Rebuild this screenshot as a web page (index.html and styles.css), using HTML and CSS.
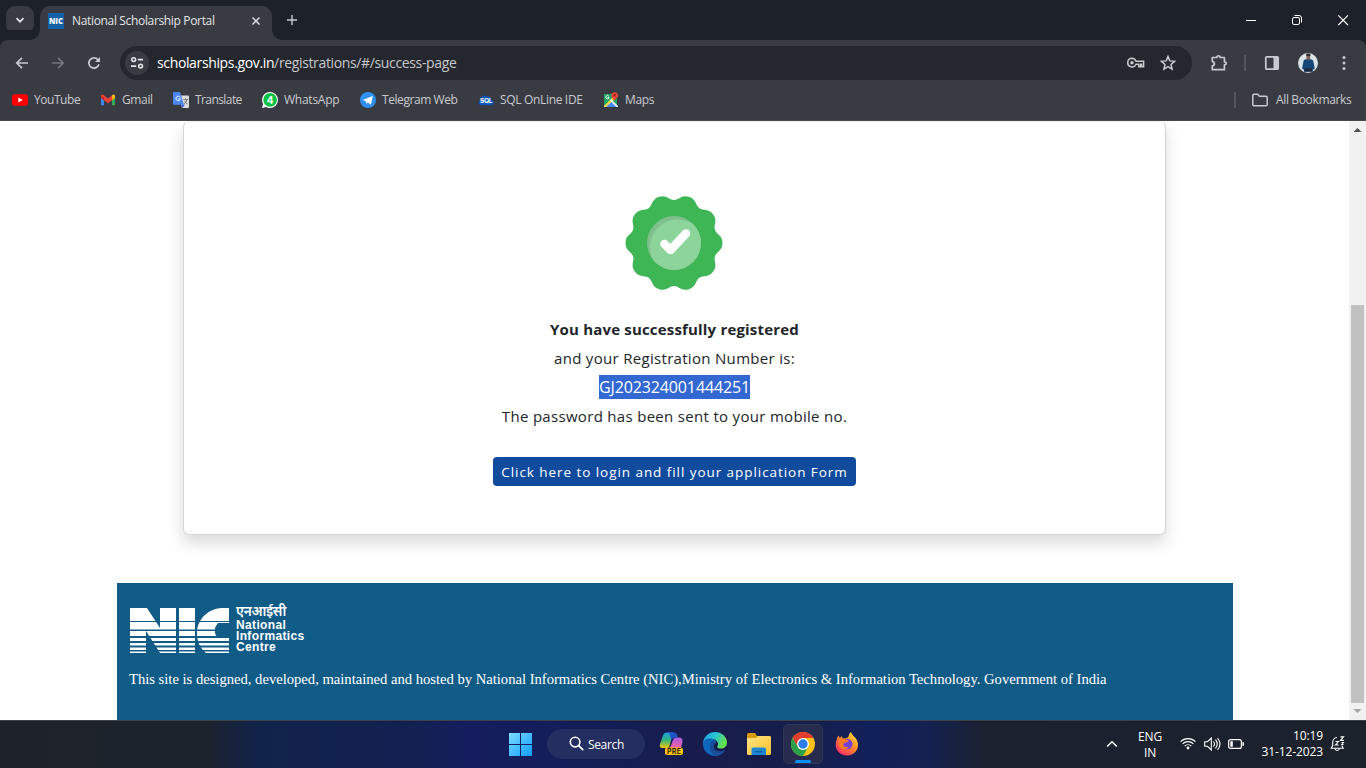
FILE: index.html
```html
<!DOCTYPE html>
<html lang="en">
<head>
<meta charset="utf-8">
<title>National Scholarship Portal</title>
<link rel="stylesheet" href="styles.css">
</head>
<body>
<div class="screen">
  <header class="tabstrip">
    <div class="tabsearch"><svg width="28" height="28" viewBox="0 0 28 28"><path d="M10.500 12.200l3.500 3.500 3.500-3.500" class="ln light thick"/></svg></div>
    <div class="tab">
      <svg class="favicon" width="16" height="16" viewBox="0 0 16 16"><rect width="16" height="16" fill="#1461a8"/><text x="1" y="10.600" class="fav-text" textLength="14" lengthAdjust="spacingAndGlyphs">NIC</text></svg>
      <span class="tab-title">National Scholarship Portal</span>
      <svg class="tab-close" width="16" height="16" viewBox="0 0 16 16"><path d="M4.500 4.500l7 7M11.500 4.500l-7 7" class="ln light mid"/></svg>
    </div>
    <svg class="newtab" width="16" height="16" viewBox="0 0 16 16"><path d="M8 3v10M3 8h10" class="ln pale mid"/></svg>
    <div class="winbtns">
      <svg width="46" height="40" viewBox="0 0 46 40"><path d="M18 20.500h10" stroke="#fff"/></svg>
      <svg width="46" height="40" viewBox="0 0 46 40"><g fill="none" stroke="#fff"><rect x="18.500" y="17.500" width="7" height="7" rx="1.500"/><path d="M20.500 15.500h4.500a2.500 2.500 0 0 1 2.500 2.500v4.500"/></g></svg>
      <svg width="46" height="40" viewBox="0 0 46 40"><path d="M18.300 15.300l9.700 9.700M28 15.300L18.300 25" stroke="#fff" stroke-width="1.100"/></svg>
    </div>
  </header>

  <div class="toolbar">
    <svg class="nav" width="16" height="16" viewBox="0 0 16 16"><path d="M14 8H3M8 2.800L2.800 8 8 13.200" class="ln pale thick"/></svg>
    <svg class="nav" width="16" height="16" viewBox="0 0 16 16"><path d="M2 8h11M8 2.800L13.200 8 8 13.200" class="ln dim thick"/></svg>
    <svg class="nav" width="16" height="16" viewBox="0 0 16 16"><path d="M12.900 9.300A5.100 5.100 0 1 1 11.800 4.600L13.400 6.200" class="ln pale thick"/><path d="M14 1.900v5H9z" fill="#c7cad3"/></svg>
    <div class="omnibox">
      <span class="siteinfo"><svg width="24" height="24" viewBox="0 0 24 24"><g fill="none" stroke="#e3e4e8" stroke-width="1.600"><circle cx="8.700" cy="8.600" r="1.900"/><path d="M12.800 8.600H18M6 15.100h5.200"/><circle cx="15.600" cy="15.100" r="1.900"/></g></svg></span>
      <span class="url"><b>scholarships.gov.in</b>/registrations/#/success-page</span>
      <svg class="key" width="18" height="12" viewBox="0 0 18 12"><path d="M5 1.300a4.300 4.300 0 1 0 4 6h2.800v2.500h1.800V7.300h1v2.500h2V4.300H9A4.300 4.300 0 0 0 5 1.300z" fill="none" stroke="#c7c8cc" stroke-width="1.500"/><circle cx="5" cy="5.700" r="1.800" fill="#c7c8cc"/></svg>
      <svg class="star" width="18" height="18" viewBox="0 0 18 18"><path d="M9 2.500l1.800 4.400 4.800.4-3.600 3.100 1.100 4.700L9 12.600l-4.100 2.500L6 10.400 2.400 7.300l4.800-.4z" class="ln pale" stroke-width="1.500"/></svg>
    </div>
    <svg class="ext" width="18" height="18" viewBox="0 0 18 18"><path d="M2.300 3.500h4.600c-.1-2.300 3.400-2.300 3.200 0h4.300v4.300c2.300 0 2.300 3.200 0 3.100v4.800H2.300v-3.800c2.800-.3 2.800-4 0-4.300z" class="ln pale" stroke-width="1.700" stroke-linejoin="round"/></svg>
    <i class="sep"></i>
    <svg class="panel" width="16" height="16" viewBox="0 0 16 16"><rect x="1.800" y="1.800" width="12.400" height="12.400" rx="1" class="ln pale" stroke-width="1.700"/><path d="M9.500 2h5v12h-5z" fill="#c7cad3"/></svg>
    <svg class="avatar" width="20" height="20" viewBox="0 0 20 20"><circle cx="10" cy="10" r="10" fill="#d9e3e5"/><path d="M5.500 8.200Q6 5.900 10.300 6q4.500 0 5 2.200l1.500 7.300-1.900 1.200v2H6v-2l-1.900-1z" fill="#164578"/><path d="M8.400 1.700q2-1.300 3.800 0v4q-2 2-3.800 0z" fill="#816456"/><path d="M8.200 1.200q2-1.200 4.200 0v1.600H8.200z" fill="#202026"/><path d="M6.500 15.500h7.500v3H6.500z" fill="#222936"/></svg>
    <svg class="dots" width="4" height="16" viewBox="0 0 4 16"><g fill="#c7cad3"><circle cx="2" cy="2.500" r="1.500"/><circle cx="2" cy="8" r="1.500"/><circle cx="2" cy="13.500" r="1.500"/></g></svg>
  </div>

  <nav class="bookmarks">
    <a class="bm bm-yt"><svg width="16" height="16" viewBox="0 0 16 16"><rect y="2.300" width="16" height="11.500" rx="2.700" fill="#f00"/><path d="M6.300 5.500v5l4.300-2.500z" fill="#fff"/></svg><span>YouTube</span></a>
    <a class="bm bm-gm"><svg width="16" height="16" viewBox="0 0 16 16"><path d="M1 4v9.300h3V7z" fill="#4285f4"/><path d="M12 7v6.300h3V4z" fill="#34a853"/><path d="M1 3.800Q1.300 2 3.300 2.700L8 6.400l4.700-3.700 2.300 1.800-1.200 2.600L8 11.200 1 6z" fill="#ea4335"/><path d="M12 3.300q2.600-1.900 3 .8V6l-3 2.300z" fill="#fbbc04"/><path d="M1 4v2l3 2.300V6z" fill="#c5221f"/></svg><span>Gmail</span></a>
    <a class="bm bm-tr"><svg width="16" height="16" viewBox="0 0 16 16"><path d="M6 3.500h9q1 0 1 1V15q0 1-1 1H9z" fill="#dadce0"/><path d="M8 12.500h4L9.500 16z" fill="#3367d6"/><path d="M1 0h6l4 12.700H1q-1 0-1-1V1q0-1 1-1z" fill="#4c87f0"/><path d="M7 5.300a2.200 2.200 0 1 0 .3 1.600H5.200" fill="none" stroke="#fff"/><path d="M10.400 7.500h4.700M12.700 6.500v1M14.100 7.600q-.8 3-3 4.300M11.500 9q1 2 3 3" fill="none" stroke="#777"/></svg><span>Translate</span></a>
    <a class="bm bm-wa"><svg width="16" height="16" viewBox="0 0 16 16"><path d="M8 0a8 8 0 0 1 0 16q-2 0-3.800-1L0 16l1.100-4A8 8 0 0 1 8 0z" fill="#fff"/><circle cx="8.100" cy="7.900" r="6.800" fill="#09c143"/><text x="8" y="11.700" class="wa-num">4</text></svg><span>WhatsApp</span></a>
    <a class="bm bm-tg"><svg width="16" height="16" viewBox="0 0 16 16"><circle cx="8" cy="8" r="8" fill="#2f91ee"/><path d="M2.700 8L12.700 4 11 12.700 7.800 10.400 6.300 11.800 6 9.200z" fill="#fff"/></svg><span>Telegram Web</span></a>
    <a class="bm bm-sql"><svg width="16" height="16" viewBox="0 0 16 16"><path d="M3.500 13.200C0 13 0 9 2.500 8.200 2.500 4 6.500 1.800 9 4.700c3-1 4.500 1 4.300 3 3.500 1 3.200 5.300 0 5.500z" fill="#0756b8"/><text x="2" y="10.900" class="sql-text" textLength="12" lengthAdjust="spacingAndGlyphs">SQL</text></svg><span>SQL OnLine IDE</span></a>
    <a class="bm bm-map"><svg width="16" height="16" viewBox="0 0 16 16"><path d="M1 2h13v13H1z" fill="#1ea362"/><path d="M8 9l6.500 6H2z" fill="#4a89f3"/><path d="M1 14L12 3h3v1L3 15H1z" fill="#ffd94b"/><path d="M8.200 7.200L15 14v1h-1.500L7 8.500z" fill="#fff"/><path d="M5.800 4.100a1.700 1.700 0 1 0 .4 1.400H4.500" fill="none" stroke="#fff" stroke-width=".9"/><path d="M11.700 9.500C11.500 7 8.500 6 8.500 3.400a3.200 3.200 0 0 1 6.400 0c0 2.600-3 3.600-3.200 6.100z" fill="#ea4335"/><circle cx="11.700" cy="3.300" r="1.100" fill="#8a1a12"/></svg><span>Maps</span></a>
    <i class="sep sep-bm"></i>
    <a class="bm bm-all"><svg width="18" height="16" viewBox="0 0 18 16"><path d="M1.800 3.700q0-1.400 1.400-1.400h3.500L8.500 4.200h6.300q1.400 0 1.400 1.400v6.800q0 1.300-1.400 1.300H3.200q-1.400 0-1.400-1.300z" class="ln pale" stroke-width="1.500"/></svg><span>All Bookmarks</span></a>
  </nav>

  <main class="viewport">
    <div class="page">
      <section class="card">
        <svg class="seal" width="98" height="96" viewBox="0 0 98 96">
          <defs>
            <path id="lobe" d="M0 0L40.900-13.290C42.450-8.530 48.500-8 48.500 0S42.450 8.530 40.900 13.290z"/>
            <clipPath id="disc"><circle cx="49" cy="48" r="27"/></clipPath>
          </defs>
          <g transform="translate(49 48)" fill="#3eb655"><circle r="42.900"/><use href="#lobe"/><use href="#lobe" transform="rotate(36)"/><use href="#lobe" transform="rotate(72)"/><use href="#lobe" transform="rotate(108)"/><use href="#lobe" transform="rotate(144)"/><use href="#lobe" transform="rotate(180)"/><use href="#lobe" transform="rotate(216)"/><use href="#lobe" transform="rotate(252)"/><use href="#lobe" transform="rotate(288)"/><use href="#lobe" transform="rotate(324)"/></g>
          <circle cx="49" cy="48" r="27" fill="#7fbf8c"/>
          <circle cx="52.500" cy="52" r="27.500" fill="#8dd49a" clip-path="url(#disc)"/>
          <path d="M39.500 49l6 6L61 38.500" fill="none" stroke="#fff" stroke-width="8.500" stroke-linecap="round" stroke-linejoin="round"/>
        </svg>
        <p class="msg strong"><span>You have successfully registered</span></p>
        <p class="msg reg"><span>and your Registration Number is:</span></p>
        <p class="msg num"><mark>GJ202324001444251</mark></p>
        <p class="msg pass"><span>The password has been sent to your mobile no.</span></p>
        <button class="login">Click here to login and fill your application Form</button>
      </section>
      <footer class="foot">
        <div class="brand">
          <svg width="100" height="46" viewBox="0 0 100 46"><g fill="#fff"><path d="M0 0h17l13 20V0h16v45H30L16 23v22H0z"/><path d="M49 0h16v45H49z"/><path d="M99 0H92C77 1 67 12 67 25c0 9 3 15 9 20h23V29H87q-5-7 1-14h11z"/></g><g fill="#115b87"><path d="M0 13h100v1H0zM0 21.500h100V23H0zM0 28h100v2H0zM0 33h100v2H0zM0 37.500h100v2H0zM0 42h100v1.500H0z"/></g></svg>
          <div class="brand-text"><span class="hi">एनआईसी</span><span>National</span><span>Informatics</span><span>Centre</span></div>
        </div>
        <p class="credit">This site is designed, developed, maintained and hosted by National Informatics Centre (NIC),Ministry of Electronics &amp; Information Technology. Government of India</p>
      </footer>
    </div>
    <div class="scroll">
      <svg width="17" height="17" viewBox="0 0 17 17"><path d="M4.500 11l4-4 4 4z" fill="#505050"/></svg>
      <i class="thumb"></i>
      <svg width="17" height="17" viewBox="0 0 17 17"><path d="M4.500 6l4 4 4-4z" fill="#a3a3a3"/></svg>
    </div>
  </main>

  <div class="taskbar">
    <div class="apps">
      <svg class="start" width="23" height="23" viewBox="0 0 23 23"><defs><linearGradient id="w" x2="1" y2="1"><stop stop-color="#7ddcff"/><stop offset="1" stop-color="#0d9cfb"/></linearGradient></defs><path d="M0 0h11v11H0zM12 0h11v11H12zM0 12h11v11H0zM12 12h11v11H12z" fill="url(#w)"/></svg>
      <div class="search"><svg width="15" height="15" viewBox="0 0 15 15"><circle cx="6.100" cy="6.100" r="4.800" fill="none" stroke="#fff" stroke-width="1.600"/><path d="M9.700 9.700l4 4" stroke="#fff" stroke-width="1.700" stroke-linecap="round"/></svg><span>Search</span></div>
      <svg class="copilot" width="25" height="24" viewBox="0 0 25 24"><defs><linearGradient id="c1" x2="0" y2="1"><stop stop-color="#1a9fe6"/><stop offset=".5" stop-color="#37b77a"/><stop offset="1" stop-color="#f2c60d"/></linearGradient><linearGradient id="c2" x2="0" y2="1"><stop stop-color="#a45ee5"/><stop offset="1" stop-color="#f5619b"/></linearGradient></defs><path d="M4 3.500Q5 .5 8 .5h6L10.500 14q-.5 2-3 2H3q-3 0-2-4z" fill="url(#c1)"/><path d="M10 .5h5q3 0 3.500 5h-3q-2 0-3 3z" fill="#1e55c9"/><path d="M17 5.500h3q4 0 3.500 4.500L22 16H11l3-8q.7-2.500 3-2.500z" fill="url(#c2)"/><rect x="6" y="15.500" width="18" height="7.500" rx="2.500" fill="#ffc400"/><text x="8" y="21.800" class="pre" textLength="14">PRE</text></svg>
      <svg class="edge" width="24" height="24" viewBox="0 0 24 24"><defs><linearGradient id="e" x2="1" y2=".4"><stop stop-color="#1c9be2"/><stop offset=".55" stop-color="#2bc5cf"/><stop offset="1" stop-color="#66e04b"/></linearGradient></defs><path d="M0 11C1 4 6 0 12 0c8 0 12 6 12 10.500 0 4-3 6-6 6-4 0-4.500-1.700-3-3.500C16 9 10 5 5 7.500 2 9 .5 10.500 0 11z" fill="url(#e)"/><path d="M0 11c1-4 4-5 7.500-4.500C12 7 14 10 12.500 11c-3 2-2.500 8 4 8.500 2.500.3 4-1 5.500-1.500C20 22 15.500 24 12 24 5 24-.5 18 0 11z" fill="#0f67bd"/><path d="M7 12c1-4 6-4.500 5.500-1C9 13.500 10 18 15 19.300c3 .7 5-.7 7-1.300-2 4-7.500 6-9.500 5.800C8 22 6 17 7 12z" fill="#164d96"/></svg>
      <svg class="folder" width="24" height="22" viewBox="0 0 24 22"><defs><linearGradient id="f" x2="1" y2="1"><stop stop-color="#ffe584"/><stop offset="1" stop-color="#fbc02d"/></linearGradient></defs><path d="M0 1.500Q0 0 1.500 0H8l2 3h12.500Q24 3 24 4.500V10H0z" fill="#d99c09"/><path d="M0 5h9l2-2h11.500Q24 3 24 4.500V20.500q0 1.500-1.500 1.500h-21Q0 22 0 20.500z" fill="url(#f)"/><path d="M4.500 22v-6q0-1.500 1.500-1.500h11.500q1.500 0 1.500 1.500v6z" fill="#1e87d2"/><path d="M8 18h7v1.300H8z" fill="#0b609f"/></svg>
      <div class="active"><svg width="24" height="24" viewBox="0 0 24 24"><circle cx="12" cy="12" r="12" fill="#fbc116"/><path d="M1.600 6A12 12 0 0 1 22.400 6H12L6.800 15z" fill="#e33b2e"/><path d="M1.600 6A12 12 0 0 0 12 24l5.200-9L12 17 6.800 15z" fill="#2aa04a"/><circle cx="12" cy="12" r="6" fill="#fff"/><circle cx="12" cy="12" r="4.700" fill="#2a7de9"/></svg><i></i></div>
      <svg class="firefox" width="24" height="24" viewBox="0 0 24 24"><defs><linearGradient id="ff" x1="1" x2=".2" y2="1"><stop stop-color="#fff044"/><stop offset=".45" stop-color="#ff9420"/><stop offset="1" stop-color="#fa256d"/></linearGradient></defs><path d="M1.500 8Q2 5 3.500 3.500L4.800 6 7 4l.5 2.500L12 6l1.500-1.500Q14 1 16 0q.5 2.500 3 4.500 4 3.500 4 8.500C23 19 18 23.500 12 23.500S.7 19 .7 13q0-3 .8-5z" fill="url(#ff)"/><circle cx="12.300" cy="12" r="5.200" fill="#7542d8"/><path d="M3.500 9q3-3 7.500-1.500l3 1.200q-1 1.800-3.500 1.800-3.500 1-1.500 4 2.500 1.300 5-.3-1.500 3-5.500 3.300-5.500-1.500-5-8.500z" fill="#ff7a24"/></svg>
    </div>
    <div class="tray">
      <svg class="chev" width="12" height="8" viewBox="0 0 12 8"><path d="M1.200 6.500L6 1.700l4.800 4.800" fill="none" stroke="#fff" stroke-width="1.500"/></svg>
      <div class="lang"><span>ENG</span><span>IN</span></div>
      <svg class="wifi" width="16" height="13" viewBox="0 0 16 13"><g fill="none" stroke="#fff" stroke-width="1.150"><path d="M.6 4.700a10.500 10.500 0 0 1 14.800 0M2.600 6.900a7.600 7.600 0 0 1 10.800 0M4.700 9.100a4.700 4.700 0 0 1 6.600 0"/></g><circle cx="8" cy="11" r="1.400" fill="#fff"/></svg>
      <svg class="vol" width="17" height="14" viewBox="0 0 17 14"><g fill="none" stroke="#fff" stroke-width="1.100"><path d="M.7 4.700h2.800L7.300 1v12L3.500 9.300H.7zM9.500 4.500q2 2.500 0 5M11.500 2.700q3.500 4.300 0 8.600M13.500 1q5 6 0 12"/></g></svg>
      <svg class="bat" width="16" height="10" viewBox="0 0 16 10"><rect x=".6" y=".6" width="12.800" height="8.800" rx="2" fill="none" stroke="#fff" stroke-width="1.200"/><path d="M2.300 2.300h2.500v5.400H2.300zM14.500 3h.5q1 0 1 1v2q0 1-1 1h-.5z" fill="#fff"/></svg>
      <div class="clock"><span>10:19</span><span class="date">31-12-2023</span></div>
      <svg class="bell" width="16" height="16" viewBox="0 0 16 16"><g fill="none" stroke="#fff" stroke-width="1.100"><path d="M7 1.500C4 1.600 2.700 4.300 2.700 6.500v3L1.200 12.300h12L11.800 9.500M5 13q2 3 4.500 0M5.500 5.500h3l-3 3.500h3.200M10.500.9h3l-3 3.500h3.300M11.500 6.500h1.800l-1.500 2h1.700"/></g></svg>
    </div>
  </div>
</div>
</body>
</html>
```
FILE: styles.css
```css
* { box-sizing: border-box; }
body { margin: 0; font-family: "Open Sans", "Noto Sans", sans-serif; }
svg { display: block; flex: none; }
.screen { width: 1366px; height: 768px; overflow: hidden; display: flex; flex-direction: column; background: #fff; }
.ln { fill: none; }
.light { stroke: #e3e4e8; }
.pale { stroke: #c7cad3; }
.dim { stroke: #74767c; }
.thick { stroke-width: 1.7; }
.mid { stroke-width: 1.4; }

.tabstrip { height: 40px; flex: none; background: #1d2129; display: flex; align-items: center; padding-left: 6px; }
.tabsearch { width: 28px; height: 28px; border-radius: 9px; background: #393b43; }
.tab { position: relative; width: 232px; height: 34px; margin: 6px 0 0 6px; padding: 0 8px; background: #393b43; border-radius: 10px 10px 0 0; display: flex; align-items: center; padding-bottom: 5px; }
.tab::before, .tab::after { content: ""; position: absolute; bottom: 0; width: 10px; height: 10px; }
.tab::before { left: -10px; background: radial-gradient(circle at 0 0, transparent 9.500px, #393b43 10px); }
.tab::after { right: -10px; background: radial-gradient(circle at 100% 0, transparent 9.500px, #393b43 10px); }
.tab-title { margin-left: 8px; font-size: 12px; line-height: 18px; color: #e3e4e8; white-space: nowrap; letter-spacing: -.34px; }
.fav-text { font: 900 8px "Open Sans", sans-serif; fill: #fff; }
.tab-close { margin-left: auto; }
.newtab { margin-left: 12px; }
.winbtns { display: flex; margin-left: auto; }

.toolbar { height: 46px; flex: none; background: #393b43; display: flex; align-items: center; padding: 0 20px 0 14px; box-shadow: 0 -10px 0 #1d2129; border-radius: 8px 8px 0 0; }
.nav { margin-right: 20px; }
.omnibox { width: 1072px; height: 34px; margin-left: -2px; border-radius: 17px; background: #24272e; display: flex; align-items: center; padding: 0 15px 0 5px; }
.siteinfo { width: 24px; height: 24px; border-radius: 50%; background: #393b43; }
.url { margin-left: 8px; font-size: 14px; line-height: 20px; color: #c7c8cc; letter-spacing: -.36px; }
.url b { font-weight: 400; color: #fff; }
.key { margin-left: auto; margin-right: 14px; }
.ext { margin-left: 18px; }
.sep { width: 2px; height: 16px; background: #53555d; }
.toolbar .sep { margin-left: 16px; }
.panel { margin-left: 18px; }
.avatar { margin-left: 18px; }
.dots { margin-left: auto; }

.bookmarks { height: 35px; flex: none; background: #393b43; border-bottom: 1px solid #47494f; display: flex; align-items: center; padding: 0 15px 7px 12px; font-size: 12px; color: #c9cacf; }
.bm { display: flex; align-items: center; gap: 6px; white-space: nowrap; letter-spacing: -.36px; }
.bm-yt { width: 88px; letter-spacing: -.45px; }
.bm-gm { width: 73px; }
.bm-tr { width: 89px; letter-spacing: -.58px; }
.bm-wa { width: 98px; letter-spacing: -.25px; }
.bm-tg { width: 118px; letter-spacing: -.43px; }
.bm-sql { width: 125px; letter-spacing: -.33px; }
.wa-num { font: 700 10px Inter, sans-serif; fill: #fff; text-anchor: middle; }
.sql-text { font: 700 6px Inter, sans-serif; fill: #fff; }
.sep-bm { margin-left: auto; margin-right: 15px; }
.bm-all { width: 100px; gap: 7px; }

.viewport { height: 599px; flex: none; display: flex; overflow: hidden; }
.page { width: 1349px; }
.card { width: 983px; height: 414px; margin: 0 0 48px 183px; background: #fff; border: 1px solid #d5d5d5; border-top-color: #eee; border-radius: 6px; box-shadow: 0 8px 16px rgba(0,0,0,.15); display: flex; flex-direction: column; align-items: center; padding-top: 73px; }
.seal { margin: 0 1px 24px 0; }
.msg { margin: 0; height: 29px; line-height: 29px; font-size: 15px; color: #212529; white-space: nowrap; letter-spacing: .31px; }
.strong { font-weight: 700; letter-spacing: .18px; }
.num { font-size: 16px; letter-spacing: -.12px; }
mark { display: inline-block; height: 24px; line-height: 24px; background: #3367d1; color: #fff; }
.login { width: 363px; height: 29px; margin-top: 26px; border: 0; border-radius: 4px; background: #114b9e; color: #fff; font: 13.500px/29px "Open Sans", sans-serif; letter-spacing: .94px; padding: 1px 0 0; white-space: nowrap; }
.foot { width: 1116px; height: 138px; margin-left: 117px; background: #115b87; color: #fff; padding: 20px 12px; }
.brand { display: flex; align-items: flex-start; height: 51px; padding: 5px 0 0 1px; }
.brand-text { margin: -5px 0 0 6px; display: flex; flex-direction: column; font: 700 12px/11px "Liberation Sans", sans-serif; letter-spacing: .35px; }
.brand-text .hi { font: 600 13.500px/20px "Noto Sans Devanagari", "Noto Sans", sans-serif; height: 17px; letter-spacing: -.2px; }
.credit { margin: 17px 0 0; font: 14.670px/17px "Liberation Serif", serif; white-space: nowrap; letter-spacing: -.022px; }
.scroll { width: 17px; background: #f1f1f1; display: flex; flex-direction: column; }
.thumb { width: 13px; height: 398px; margin: auto 2px 0; background: #c1c1c1; }

.taskbar { height: 48px; flex: none; border-top: 1px solid #3d414a; background: linear-gradient(90deg, #1e232b 0, #1d232d 205px, #12234b 260px, #122052 420px, #151d5e 470px, #131e55 600px, #181c4c 700px, #161e4b 800px, #12205a 870px, #142150 930px, #1b212f 985px, #1c222c 1366px); display: flex; align-items: center; }
.apps { display: flex; align-items: center; padding: 0 0 2px 509px; height: 47px; }
.start { margin-top: 1px; }
.search { width: 98px; height: 30px; margin-left: 15px; border-radius: 15px; background: #242e60; color: #fff; font-size: 12px; display: flex; align-items: center; gap: 4px; padding-left: 22px; }
.search span { letter-spacing: -.35px; padding-top: 1px; }
.copilot { margin-left: 14px; }
.pre { font: 700 7px Inter, sans-serif; fill: #222; }
.edge { margin-left: 19px; }
.folder { margin-left: 20px; }
.active { width: 40px; height: 40px; margin-left: 12px; border: 1px solid #303653; border-radius: 5px; background: #272c4f; display: flex; flex-direction: column; align-items: center; padding-top: 7px; }
.active i { width: 16px; height: 3px; border-radius: 2px; background: #0a91f5; margin-top: 4px; }
.firefox { margin-left: 12px; }
.tray { display: flex; align-items: center; margin-left: auto; padding: 0 20px 2px 0; color: #fff; font-size: 12px; line-height: 16px; letter-spacing: -.1px; }
.lang { width: 28px; margin-left: 18px; padding-top: 2px; text-align: center; display: flex; flex-direction: column; }
.wifi { margin-left: 16px; }
.vol { margin-left: 8px; }
.bat { margin-left: 7px; }
.clock { width: 70px; margin-left: 9px; display: flex; flex-direction: column; align-items: flex-end; white-space: nowrap; }
.bell { margin-left: 7px; }
```
